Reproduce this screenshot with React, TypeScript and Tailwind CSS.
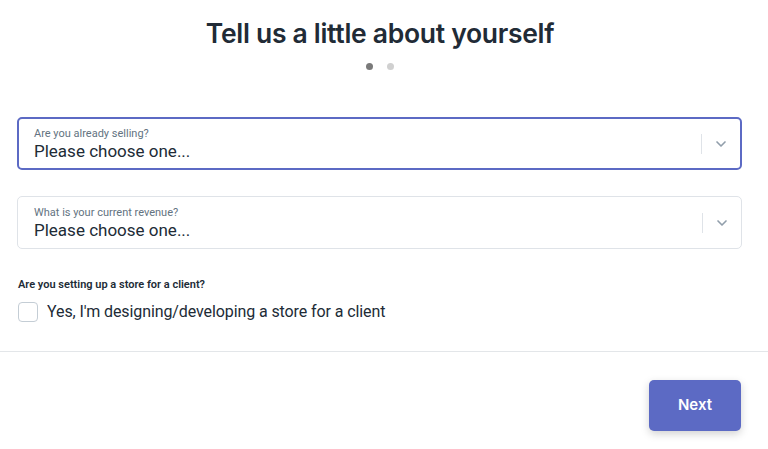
import { ChevronDown } from 'lucide-react';

interface SelectFieldProps {
  label: string;
  focused?: boolean;
}

function SelectField({ label, focused }: SelectFieldProps) {
  return (
    <div
      className={`relative flex h-[53px] items-center rounded-[5px] bg-white ${
        focused ? 'border-2 border-[#5c6ac4]' : 'border border-[#dfe3e8]'
      }`}
    >
      <div className={`flex flex-1 flex-col ${focused ? 'pl-[15px]' : 'pl-4'}`}>
        <span className="text-[11px] leading-[14px] text-[#637381]">{label}</span>
        <span className="text-[17px] leading-[20px] text-[#212b36]">Please choose one...</span>
      </div>
      <div className="h-5 w-px bg-[#dfe3e8]" />
      <div className="flex w-[38px] items-center justify-center">
        <ChevronDown size={16} strokeWidth={2.5} className="text-[#919eab]" />
      </div>
    </div>
  );
}

export default function App() {
  return (
    <div className="h-[449px] w-[768px] overflow-hidden bg-white font-['Roboto',sans-serif]">
      <div className="flex flex-col items-center pr-[8px] pt-[14px]">
        <h1 className="font-['Inter',sans-serif] text-[26.5px] font-semibold leading-[38px] tracking-[-0.3px] text-[#212b36]">
          Tell us a little about yourself
        </h1>
        <div className="mt-[11px] flex gap-[14px]">
          <span className="h-[7px] w-[7px] rounded-full bg-[#7a7a7a]" />
          <span className="h-[7px] w-[7px] rounded-full bg-[#d0d0d0]" />
        </div>
      </div>

      <div className="mt-[47px] flex flex-col gap-[26px] px-[17px] pr-[26px]">
        <SelectField label="Are you already selling?" focused />
        <SelectField label="What is your current revenue?" />
      </div>

      <div className="mt-[29px] px-[18px]">
        <p className="text-[11px] font-semibold leading-[14px] text-[#212b36]">
          Are you setting up a store for a client?
        </p>
        <label className="mt-[10px] flex items-center gap-[9px]">
          <span className="h-[20px] w-[20px] rounded-[4px] border border-[#c4cdd5] bg-white" />
          <span className="text-[16px] leading-[20px] tracking-[-0.1px] text-[#212b36]">
            Yes, I'm designing/developing a store for a client
          </span>
        </label>
      </div>

      <div className="mt-[29px] border-t border-[#e3e6e9]" />

      <div className="flex justify-end pr-[27px] pt-[28px]">
        <button className="h-[51px] w-[92px] rounded-[5px] bg-[#5c6ac4] font-['Inter',sans-serif] text-[15px] font-semibold text-white shadow-[0_3px_8px_rgba(0,0,0,0.18)]">
          Next
        </button>
      </div>
    </div>
  );
}
